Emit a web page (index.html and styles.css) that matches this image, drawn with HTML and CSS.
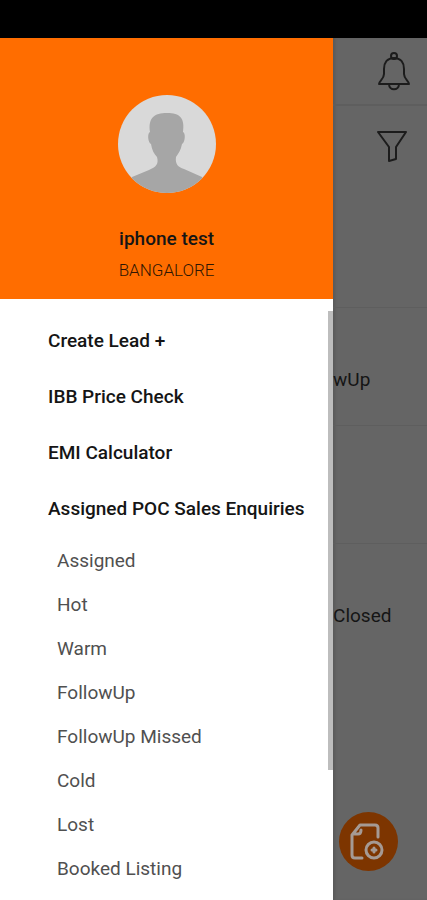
FILE: index.html
```html
<!DOCTYPE html>
<html lang="en">
<head>
  <meta charset="UTF-8" />
  <meta name="viewport" content="width=device-width, initial-scale=1.0"/>
  <title>Sales Leads</title>
  <link rel="stylesheet" href="styles.css">
</head>
<body>
  <div class="status-bar"></div>

  <div class="screen">
    <aside class="drawer">
      <header class="profile">
        <svg class="avatar" viewBox="0 0 98 98" aria-hidden="true">
          <defs>
            <clipPath id="avatarClip"><circle cx="49" cy="49" r="49"/></clipPath>
          </defs>
          <g clip-path="url(#avatarClip)">
            <rect width="98" height="98" fill="#d9d9d9"/>
            <path d="M32 37C30 23 36 18 49 18C62 18 67 23 65 37C68 38 67 48 64 49C63 55 60 59 58 62C57 69 60 72 66 74L84 82L90 98H8L14 82L31 75C38 72 41 69 39 62C36 59 34 55 33 49C30 48 29 38 32 37Z" fill="#a6a6a6"/>
          </g>
        </svg>
        <h1>iphone test</h1>
        <p>BANGALORE</p>
      </header>

      <nav class="menu">
        <a href="#">Create Lead +</a>
        <a href="#">IBB Price Check</a>
        <a href="#">EMI Calculator</a>
        <a href="#">Assigned POC Sales Enquiries</a>
        <div class="submenu">
          <a href="#">Assigned</a>
          <a href="#">Hot</a>
          <a href="#">Warm</a>
          <a href="#">FollowUp</a>
          <a href="#">FollowUp Missed</a>
          <a href="#">Cold</a>
          <a href="#">Lost</a>
          <a href="#">Booked Listing</a>
        </div>
        <span class="scroll-thumb"></span>
      </nav>
    </aside>

    <!-- Dashboard dimmed behind the open drawer -->
    <main class="dashboard">
      <div class="toolbar">
        <button class="icon-button" aria-label="Notifications">
          <svg width="34" height="40" viewBox="0 0 34 40" fill="none" stroke="#1c1c1c" stroke-width="2" stroke-linejoin="round">
            <circle cx="17" cy="5" r="3"/>
            <path d="M17 7C10 7 7 12 7 18V23C7 28 2 30 2 33H32C32 30 27 28 27 23V18C27 12 24 7 17 7Z"/>
            <path d="M12 33C12 40 22 40 22 33"/>
          </svg>
        </button>
      </div>
      <div class="filter-bar">
        <button class="icon-button" aria-label="Filter">
          <svg width="34" height="34" viewBox="0 0 34 34" fill="none" stroke="#1c1c1c" stroke-width="2" stroke-linejoin="round">
            <path d="M1 3H29L19 18V30L12 32V18Z"/>
          </svg>
        </button>
      </div>
      <div class="card">wUp</div>
      <div class="card"></div>
      <div class="card">Closed</div>
      <button class="add-button" aria-label="Add lead">
        <svg width="38" height="38" viewBox="0 0 38 38" fill="none" stroke="#a59a94" stroke-width="3" stroke-linecap="round" stroke-linejoin="round">
          <path d="M12 35H5Q2 35 2 32V12L10 2H25Q28 2 28 5V14M3 11H8Q11 11 11 7"/>
          <circle cx="24" cy="27" r="8"/>
          <path d="M24 25V29M22 27H26"/>
        </svg>
      </button>
    </main>
  </div>
</body>
</html>
```
FILE: styles.css
```css
* {
  box-sizing: border-box;
}

body {
  margin: 0;
  height: 100vh;
  display: flex;
  flex-direction: column;
  overflow: hidden;
  font-family: Roboto, sans-serif;
  font-size: 19px;
  color: #151515;
  background-color: #656565;
}

a {
  color: inherit;
  text-decoration: none;
}

button {
  border: none;
  padding: 0;
  cursor: pointer;
}

.status-bar {
  flex: none;
  height: 38px;
  background-color: #000;
}

.screen {
  flex: 1;
  min-height: 0;
  display: flex;
}

/* Drawer */
.drawer {
  width: 78%;
  display: flex;
  flex-direction: column;
  background-color: #fff;
}

.profile {
  flex: none;
  display: flex;
  flex-direction: column;
  align-items: center;
  padding: 57px 16px 16px;
  background-color: #ff6d00;
}

.avatar {
  width: 98px;
  height: 98px;
}

.profile h1 {
  margin: 32px 0 4px;
  font-size: 19px;
  line-height: 28px;
  font-weight: 500;
}

.profile p {
  margin: 0;
  font-size: 17px;
  line-height: 26px;
  font-weight: 300;
  color: #2e1603;
}

.menu {
  flex: 1;
  min-height: 0;
  position: relative;
  padding: 14px 0 0 48px;
  overflow: hidden;
}

.menu a {
  display: block;
  line-height: 56px;
  font-weight: 500;
  white-space: nowrap;
}

.submenu {
  padding: 2px 0 0 9px;
}

.submenu a {
  line-height: 44px;
  font-weight: 400;
  color: #505050;
}

.scroll-thumb {
  position: absolute;
  top: 12px;
  right: 0;
  width: 5px;
  height: 459px;
  background-color: #bdbdbd;
}

/* Dashboard */
.dashboard {
  flex: 1;
  min-width: 0;
  position: relative;
  box-shadow: inset 3px 0 3px -1px #5a5a5a;
}

.toolbar,
.filter-bar {
  display: flex;
  align-items: center;
  justify-content: flex-end;
  height: 68px;
  padding-right: 16px;
}

.toolbar {
  border-bottom: 2px solid #5e5e5e;
}

.filter-bar {
  height: 80px;
  margin-bottom: 121px;
}

.icon-button {
  display: flex;
  background: none;
}

.card {
  height: 118px;
  padding-top: 59px;
  line-height: 26px;
  border-top: 1px solid #5e5e5e;
}

.add-button {
  position: absolute;
  right: 29px;
  bottom: 29px;
  width: 59px;
  height: 59px;
  display: flex;
  align-items: center;
  justify-content: center;
  border-radius: 50%;
  background-color: #7d3500;
}
```
